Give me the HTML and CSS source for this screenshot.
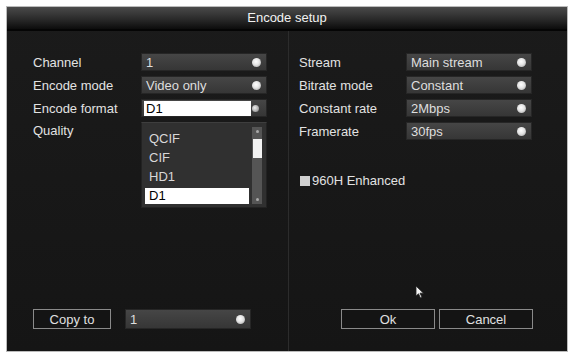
FILE: index.html
```html
<!DOCTYPE html>
<html lang="en">
  <head>
    <meta charset="UTF-8" />
    <title>Encode setup</title>
    <link rel="stylesheet" href="styles.css">
  </head>
  <body>
    <div class="dialog">
      <div class="title-bar">Encode setup</div>

      <div class="panels">
        <div class="panel left">
          <div class="rows">
            <div class="row">
              <span class="label">Channel</span>
              <div class="select"><span class="value">1</span><span class="knob"></span></div>
            </div>
            <div class="row">
              <span class="label">Encode mode</span>
              <div class="select"><span class="value">Video only</span><span class="knob"></span></div>
            </div>
            <div class="row">
              <span class="label">Encode format</span>
              <div class="select open"><span class="value field">D1</span><span class="knob small"></span></div>
            </div>
            <div class="row tall">
              <span class="label">Quality</span>
              <div class="listbox">
                <ul class="options">
                  <li>QCIF</li>
                  <li>CIF</li>
                  <li>HD1</li>
                  <li class="selected">D1</li>
                </ul>
                <div class="scrollbar">
                  <span class="arrow up"></span>
                  <span class="thumb"></span>
                  <span class="arrow down"></span>
                </div>
              </div>
            </div>
          </div>

          <div class="footer">
            <button class="btn copy">Copy to</button>
            <div class="select"><span class="value">1</span><span class="knob"></span></div>
          </div>
        </div>

        <div class="panel right">
          <div class="rows">
            <div class="row">
              <span class="label">Stream</span>
              <div class="select"><span class="value">Main stream</span><span class="knob"></span></div>
            </div>
            <div class="row">
              <span class="label">Bitrate mode</span>
              <div class="select"><span class="value">Constant</span><span class="knob"></span></div>
            </div>
            <div class="row">
              <span class="label">Constant rate</span>
              <div class="select"><span class="value">2Mbps</span><span class="knob"></span></div>
            </div>
            <div class="row">
              <span class="label">Framerate</span>
              <div class="select"><span class="value">30fps</span><span class="knob"></span></div>
            </div>
          </div>

          <label class="check"><span class="box"></span>960H Enhanced</label>

          <div class="footer buttons">
            <button class="btn">Ok</button>
            <button class="btn">Cancel</button>
          </div>
        </div>
      </div>

      <!-- mouse pointer sitting over the dialog -->
      <svg class="cursor" width="10" height="14" viewBox="0 0 10 14">
        <path d="M1 1 L1 11 L3.5 8.8 L5.5 13 L7 12.3 L5 8.2 L8.5 8.2 Z" fill="#f4f4f4" stroke="#222" stroke-width="0.8"/>
      </svg>
    </div>
  </body>
</html>
```

FILE: styles.css
```css
body {
  margin: 0;
  padding: 6px 5px 7px 6px;
  background-color: #fff;
  font-family: "Liberation Sans", Arial, sans-serif;
  font-size: 13px;
}
.dialog {
  position: relative;
  width: 562px;
  height: 346px;
  display: flex;
  flex-direction: column;
  background: linear-gradient(180deg, #1b1b1b 0%, #151515 100%);
  border: 1px solid #bbb;
  box-sizing: border-box;
  color: #e2e2e2;
}
.title-bar {
  height: 22px;
  line-height: 21px;
  text-align: center;
  color: #f2f2f2;
  background: linear-gradient(180deg, #4a4a4a 0%, #2a2a2a 55%, #0c0c0c 100%);
  border-bottom: 2px solid #050505;
}
.panels {
  flex: 1;
  display: flex;
}
.panel {
  display: flex;
  flex-direction: column;
  padding-top: 22px;
  padding-bottom: 22px;
  box-sizing: border-box;
}
.left {
  width: 282px;
  padding-left: 26px;
  border-right: 1px solid #2c2c2c;
}
.right {
  flex: 1;
  padding-left: 10px;
}
.rows {
  display: flex;
  flex-direction: column;
  gap: 5px;
}
.row {
  display: flex;
  align-items: center;
  height: 18px;
}
.row.tall {
  height: 86px;
  align-items: flex-start;
}
.row.tall .label {
  padding-top: 1px;
}
.label {
  width: 108px;
  flex-shrink: 0;
}
.right .label {
  width: 107px;
}
.select {
  width: 126px;
  height: 18px;
  display: flex;
  align-items: center;
  justify-content: space-between;
  box-sizing: border-box;
  padding: 0 5px 0 4px;
  background: linear-gradient(180deg, #464646 0%, #363636 100%);
  border: 1px solid #262626;
  color: #dedede;
}
.select.open {
  padding-left: 2px;
}
.value.field {
  width: 107px;
  height: 15px;
  line-height: 15px;
  background-color: #fff;
  color: #000;
  padding-left: 2px;
  box-sizing: border-box;
}
.knob {
  width: 9px;
  height: 9px;
  border-radius: 50%;
  background: radial-gradient(circle at 45% 40%, #ffffff 0%, #e4e4e4 45%, #9a9a9a 100%);
}
.knob.small {
  width: 7px;
  height: 7px;
  margin-right: 2px;
  background: radial-gradient(circle at 40% 40%, #eee 0%, #aaa 60%, #666 100%);
}
.listbox {
  width: 126px;
  height: 86px;
  display: flex;
  box-sizing: border-box;
  padding: 4px 4px 3px 3px;
  background-color: #303030;
  border: 1px solid #222;
  border-top-color: #3e3e3e;
}
.options {
  list-style: none;
  margin: 0;
  padding: 0;
  flex: 1;
  display: flex;
  flex-direction: column;
  justify-content: flex-end;
  gap: 3px;
  color: #d8d8d8;
}
.options li {
  height: 16px;
  line-height: 16px;
  padding-left: 4px;
}
.options li.selected {
  background-color: #fff;
  color: #000;
  margin-right: 3px;
}
.scrollbar {
  width: 10px;
  display: flex;
  flex-direction: column;
  align-items: center;
  background-color: #555;
}
.arrow {
  width: 3px;
  height: 3px;
  margin: 3px 0;
  background-color: #aaa;
  border-radius: 50%;
}
.arrow.down {
  margin-top: auto;
}
.thumb {
  width: 9px;
  height: 19px;
  margin-top: 3px;
  background-color: #f2f2f2;
}
.check {
  display: flex;
  align-items: center;
  gap: 2px;
  margin-top: 33px;
  margin-left: 1px;
}
.check .box {
  width: 10px;
  height: 10px;
  background-color: #cfcfcf;
}
.footer {
  margin-top: auto;
  display: flex;
  align-items: center;
  gap: 14px;
}
.buttons {
  margin-left: 42px;
  gap: 4px;
}
.btn {
  height: 20px;
  padding: 0;
  font-family: inherit;
  font-size: 13px;
  color: #e0e0e0;
  background-color: #141414;
  border: 1.5px solid #8a8a8a;
}
.btn.copy {
  width: 78px;
}
.buttons .btn {
  width: 94px;
}
.footer .select {
  height: 20px;
}
.cursor {
  position: absolute;
  left: 408px;
  top: 278px;
}
```
